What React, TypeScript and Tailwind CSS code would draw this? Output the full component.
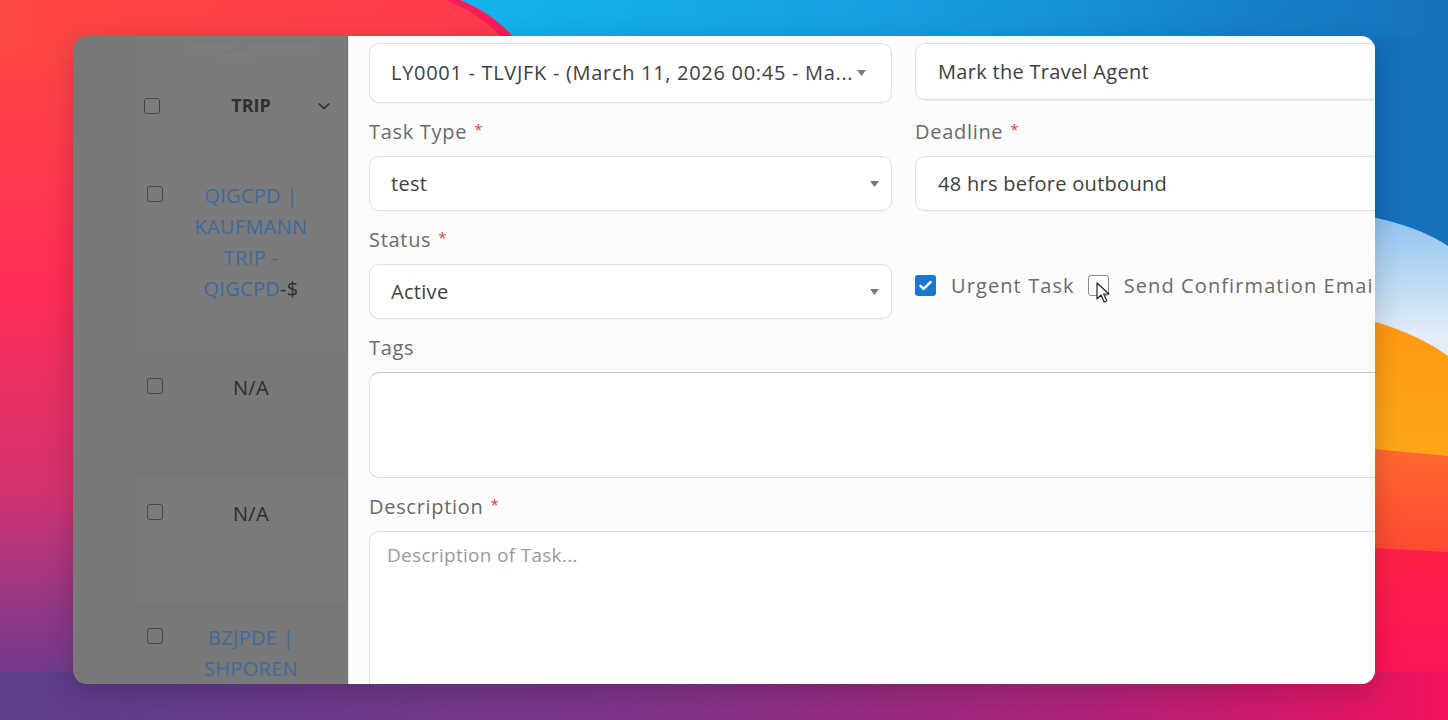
import React from 'react';

const Wallpaper: React.FC = () => (
    <svg className="absolute inset-0" width="1448" height="720" viewBox="0 0 1448 720">
        <defs>
            <linearGradient id="wpLeft" x1="0" y1="0" x2="0" y2="1">
                <stop offset="0" stopColor="#ff4a42" />
                <stop offset="0.4" stopColor="#ff2d56" />
                <stop offset="0.68" stopColor="#d43270" />
                <stop offset="0.86" stopColor="#8d3888" />
                <stop offset="1" stopColor="#5a3e8c" />
            </linearGradient>
            <linearGradient id="wpTop" x1="0" y1="0" x2="1" y2="0">
                <stop offset="0" stopColor="#ff4744" />
                <stop offset="1" stopColor="#ff2560" />
            </linearGradient>
            <linearGradient id="wpBlue" gradientUnits="userSpaceOnUse" x1="450" y1="0" x2="1448" y2="0">
                <stop offset="0" stopColor="#12b3ec" />
                <stop offset="0.45" stopColor="#179fe2" />
                <stop offset="1" stopColor="#1570bd" />
            </linearGradient>
            <linearGradient id="wpSky" gradientUnits="userSpaceOnUse" x1="0" y1="215" x2="0" y2="335">
                <stop offset="0" stopColor="#8fc3f1" />
                <stop offset="1" stopColor="#e2edf7" />
            </linearGradient>
            <linearGradient id="wpOrange" gradientUnits="userSpaceOnUse" x1="0" y1="325" x2="0" y2="450">
                <stop offset="0" stopColor="#ff9a12" />
                <stop offset="1" stopColor="#ffa618" />
            </linearGradient>
            <linearGradient id="wpCoral" gradientUnits="userSpaceOnUse" x1="0" y1="445" x2="0" y2="550">
                <stop offset="0" stopColor="#ff6a30" />
                <stop offset="1" stopColor="#ff4a34" />
            </linearGradient>
            <linearGradient id="wpRed" gradientUnits="userSpaceOnUse" x1="0" y1="545" x2="0" y2="720">
                <stop offset="0" stopColor="#ff2046" />
                <stop offset="1" stopColor="#f8105c" />
            </linearGradient>
            <linearGradient id="wpBottom" x1="0" y1="0" x2="1" y2="0">
                <stop offset="0" stopColor="#5a3e8c" />
                <stop offset="0.45" stopColor="#7f3488" />
                <stop offset="0.75" stopColor="#b0237c" />
                <stop offset="1" stopColor="#f2125d" />
            </linearGradient>
        </defs>
        <rect x="0" y="0" width="1448" height="720" fill="url(#wpLeft)" />
        <rect x="0" y="0" width="1448" height="60" fill="url(#wpTop)" />
        <path d="M460 0 C484 10 500 22 516 40 L560 80 L1448 80 L1448 0 Z" fill="url(#wpBlue)" />
        <path d="M446 0 C470 10 488 22 504 40 L516 40 C500 22 484 10 460 0 Z" fill="#ff1a58" />
        <rect x="1375" y="36" width="73" height="684" fill="#1570bd" />
        <path d="M1300 208 Q1400 214 1448 246 L1448 720 L1300 720 Z" fill="url(#wpSky)" />
        <path d="M1300 306 Q1400 320 1448 356 L1448 720 L1300 720 Z" fill="url(#wpOrange)" />
        <path d="M1300 442 L1448 456 L1448 720 L1300 720 Z" fill="url(#wpCoral)" />
        <path d="M1300 544 L1448 552 L1448 720 L1300 720 Z" fill="url(#wpRed)" />
        <rect x="0" y="672" width="1448" height="48" fill="url(#wpBottom)" />
    </svg>
);

const GreyBox: React.FC = () => <div className="w-[16px] h-[16px] border-[1.5px] border-[#474747] rounded-[3px]" />;

const TripRow: React.FC<{ h: string; shade?: boolean; children: React.ReactNode }> = ({ h, shade, children }) => (
    <div className={`flex items-start pt-[20px] ${h} ${shade ? 'bg-[#7b7b7b]' : ''}`}>
        <div className="w-[34px] pl-[11px] pt-[6px] shrink-0">
            <GreyBox />
        </div>
        <div className="w-[162px] text-center text-[20px] leading-[31px] tracking-[0.3px]">{children}</div>
    </div>
);

const TripTable: React.FC = () => (
    <div className="w-[275px] shrink-0 bg-[#787878] pl-[63px] font-['Open_Sans','Noto_Sans',sans-serif]">
        <div className="w-[209px] flex flex-col h-full">
            <div className="h-[125px] bg-[#7b7b7b] pt-[10px]">
                <div className="flex gap-[10px] pl-[50px] opacity-20">
                    <div className="h-[3px] w-[50px] bg-[#8c8c8c]" />
                    <div className="h-[3px] w-[70px] bg-[#8c8c8c]" />
                </div>
                <div className="pl-[85px] mt-[5px] opacity-20">
                    <div className="h-[3px] w-[30px] bg-[#8c8c8c]" />
                </div>
                <div className="flex items-center mt-[35px]">
                    <div className="w-[34px] pl-[8px] shrink-0">
                        <GreyBox />
                    </div>
                    <span className="w-[148px] pl-[14px] text-center text-[18px] font-bold text-[#2f2f2f]">TRIP</span>
                    <svg width="16" height="16" viewBox="0 0 24 24" fill="none" stroke="#333" strokeWidth="2.6" strokeLinecap="round" strokeLinejoin="round" className="-ml-[2px]">
                        <path d="M5 9l7 7 7-7" />
                    </svg>
                </div>
            </div>
            <TripRow h="h-[194px]" shade>
                <span className="text-[#3e6a9c]">QIGCPD |</span>
                <br />
                <span className="text-[#3e6a9c]">KAUFMANN</span>
                <br />
                <span className="text-[#3e6a9c]">TRIP -</span>
                <br />
                <span className="text-[#3e6a9c]">QIGCPD</span>
                <span className="text-[#2d2d2d]">-$</span>
            </TripRow>
            <TripRow h="h-[128px]">
                <span className="text-[#2d2d2d]">N/A</span>
            </TripRow>
            <TripRow h="h-[125px]" shade>
                <span className="text-[#2d2d2d]">N/A</span>
            </TripRow>
            <TripRow h="flex-1">
                <span className="text-[#3e6a9c]">BZJPDE |</span>
                <br />
                <span className="text-[#3e6a9c]">SHPOREN</span>
            </TripRow>
        </div>
    </div>
);

const Caret: React.FC = () => (
    <svg width="9" height="6" viewBox="0 0 9 6" className="shrink-0">
        <path d="M0 0h9L4.5 6z" fill="#7a7a7a" />
    </svg>
);

const Label: React.FC<{ text: string; required?: boolean }> = ({ text, required }) => (
    <div className="mt-[17px] mb-[12px] h-[24px] flex items-center text-[20px] tracking-[0.7px] text-[#6a6a6a]">
        {text}
        {required && <span className="text-[#e53935] text-[15px] ml-[7px] -mt-[6px]">*</span>}
    </div>
);

const boxCls = 'bg-white border border-[#e0e0e0] rounded-[10px] shadow-[0_1px_2px_rgba(0,0,0,0.04)]';

const TaskForm: React.FC = () => (
    <div className="flex-1 bg-[#fcfcfc] border-l border-[#e4e4e4] pl-[20px] pt-[7px] text-[20px] tracking-[0.3px] text-[#404040] font-['Open_Sans','Noto_Sans',sans-serif]">
        <div className="grid grid-cols-[523px_523px] gap-x-[23px] items-start">
            <div className={`${boxCls} h-[60px] flex items-center pl-[21px] gap-[4px]`}>
                <span className="whitespace-nowrap tracking-[0.7px]">LY0001 - TLVJFK - (March 11, 2026 00:45 - Ma...</span>
                <Caret />
            </div>
            <div className={`${boxCls} h-[57px] flex items-center pl-[22px]`}>Mark the Travel Agent</div>

            <div>
                <Label text="Task Type" required />
                <div className={`${boxCls} h-[55px] flex items-center justify-between pl-[21px] pr-[12px]`}>
                    <span>test</span>
                    <Caret />
                </div>
            </div>
            <div>
                <Label text="Deadline" required />
                <div className={`${boxCls} h-[55px] flex items-center pl-[22px]`}>48 hrs before outbound</div>
            </div>

            <div>
                <Label text="Status" required />
                <div className={`${boxCls} h-[55px] flex items-center justify-between pl-[21px] pr-[12px]`}>
                    <span>Active</span>
                    <Caret />
                </div>
            </div>
            <div className="mt-[47px] h-[55px] flex items-center text-[#6a6a6a] tracking-[1.1px] whitespace-nowrap">
                <div className="w-[21px] h-[21px] rounded-[3px] bg-[#1976d2] flex items-center justify-center">
                    <svg width="15" height="15" viewBox="0 0 24 24" fill="none" stroke="white" strokeWidth="4" strokeLinecap="round" strokeLinejoin="round">
                        <path d="M4 12.5l5 5L20 6.5" />
                    </svg>
                </div>
                <span className="ml-[15px]">Urgent Task</span>
                <div className="relative ml-[13px] w-[21px] h-[21px] border-[1.5px] border-[#8a8a8a] rounded-[3px] bg-white">
                    <svg className="absolute left-[7px] top-[6px]" width="14" height="22" viewBox="0 0 14 22">
                        <path d="M1 1v16l4-4 3.2 7 2.6-1.2-3.2-6.8H13z" fill="white" stroke="#222" strokeWidth="1.2" strokeLinejoin="round" />
                    </svg>
                </div>
                <span className="ml-[15px]">Send Confirmation Email</span>
            </div>

            <div className="col-span-2">
                <Label text="Tags" />
                <div className="h-[106px] bg-white border border-[#dcdcdc] border-t-[#c6c6c6] rounded-[10px]" />
            </div>

            <div className="col-span-2">
                <Label text="Description" required />
                <div className="h-[200px] bg-white border border-[#dedede] rounded-[10px] pl-[17px] pt-[9px] text-[19px] text-[#9a9a9a]">
                    Description of Task...
                </div>
            </div>
        </div>
    </div>
);

export default function App() {
    return (
        <div className="relative w-[1448px] h-[720px] overflow-hidden pl-[73px] pt-[36px]">
            <Wallpaper />
            <div className="relative z-10 flex w-[1302px] h-[648px] rounded-[14px] overflow-hidden shadow-[0_8px_30px_rgba(0,0,0,0.2)]">
                <TripTable />
                <TaskForm />
            </div>
        </div>
    );
}
